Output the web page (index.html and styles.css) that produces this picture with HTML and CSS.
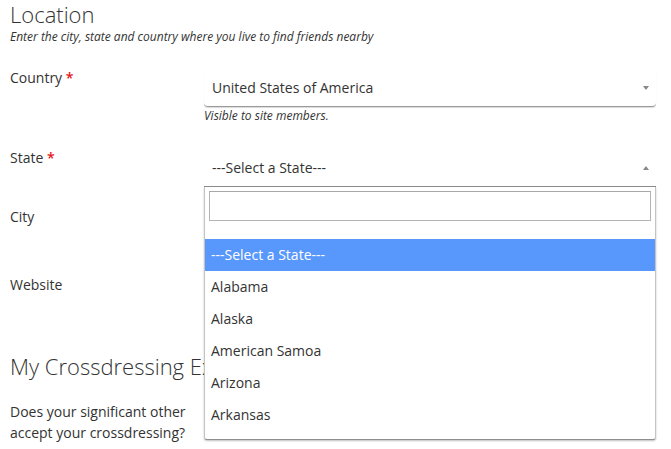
FILE: index.html
```html
<!DOCTYPE html>
<html>
<head>
<meta charset="utf-8">
<link rel="stylesheet" href="styles.css">
</head>
<body>
<div class="page">
  <h2 class="section-title">Location</h2>
  <p class="section-sub">Enter the city, state and country where you live to find friends nearby</p>

  <div class="row row-country">
    <label class="label">Country <span class="req">*</span></label>
    <div class="field">
      <div class="select">
        <span class="select-text">United States of America</span>
        <span class="arrow arrow-down"></span>
      </div>
      <div class="help">Visible to site members.</div>
    </div>
  </div>

  <div class="row row-state">
    <label class="label">State <span class="req">*</span></label>
    <div class="field field-open">
      <div class="select select-open">
        <span class="select-text">---Select a State---</span>
        <span class="arrow arrow-up"></span>
      </div>
      <div class="dropdown">
        <div class="dd-search"><input class="dd-input" type="text"></div>
        <ul class="dd-results">
          <li class="dd-option dd-active">---Select a State---</li>
          <li class="dd-option">Alabama</li>
          <li class="dd-option">Alaska</li>
          <li class="dd-option">American Samoa</li>
          <li class="dd-option">Arizona</li>
          <li class="dd-option">Arkansas</li>
        </ul>
      </div>
    </div>
  </div>

  <div class="row row-city">
    <label class="label">City</label>
    <div class="field"><div class="text-input"></div></div>
  </div>

  <div class="row row-website">
    <label class="label">Website</label>
    <div class="field"><div class="text-input"></div></div>
  </div>

  <h2 class="section-title section-title-2">My Crossdressing Experience</h2>

  <div class="row row-question">
    <label class="label label-wrap">Does your significant other accept your crossdressing?</label>
    <div class="field"></div>
  </div>
</div>
</body>
</html>
```

FILE: styles.css
```css
html, body {
  margin: 0;
  padding: 0;
  background: #fff;
}
body {
  font-family: "Open Sans", "Noto Sans", sans-serif;
  color: #333;
  font-size: 14px;
  overflow: hidden;
}
.page {
  padding: 0 10px;
  width: 646px;
}
.section-title {
  margin: 0;
  font-size: 22px;
  font-weight: 300;
  line-height: 29px;
  color: #333;
  white-space: nowrap;
}
.section-sub {
  margin: 0;
  font-size: 12px;
  font-style: italic;
  line-height: 16px;
  color: #333;
}
.row {
  display: grid;
  grid-template-columns: 194px 452px;
  align-items: start;
}
.row-country { margin-top: 24px; }
.row-state { margin-top: 25px; }
.row-city { margin-top: 21px; }
.row-website { margin-top: 30px; }
.section-title-2 { margin-top: 38px; }
.row-question { margin-top: 20px; }

.label {
  font-size: 14px;
  line-height: 17px;
  color: #333;
}
.label-wrap {
  line-height: 21px;
  padding-right: 10px;
}
.req {
  color: #e3161b;
  font-weight: 600;
}
.field {
  position: relative;
}
.select {
  height: 37px;
  border-bottom: 1px solid #9a9a9a;
  border-radius: 0 0 4px 4px;
  box-shadow: 0 1px 1px rgba(0,0,0,0.15);
  display: flex;
  align-items: center;
  justify-content: space-between;
  padding: 0 7px 0 8px;
  box-sizing: content-box;
}
.select-open {
  border-radius: 0;
  box-shadow: none;
  border-bottom-color: #8c8c8c;
}
.select-text {
  font-size: 14px;
  line-height: 34px;
  color: #333;
}
.arrow {
  width: 0;
  height: 0;
  border-left: 3.5px solid transparent;
  border-right: 3.5px solid transparent;
}
.arrow-down {
  border-top: 4px solid #888;
}
.arrow-up {
  border-bottom: 4px solid #888;
}
.help {
  margin-top: 1px;
  font-size: 12px;
  font-style: italic;
  line-height: 16px;
  color: #333;
}
.text-input {
  height: 37px;
  border-bottom: 1px solid #9a9a9a;
}
.dropdown {
  position: absolute;
  top: 100%;
  left: 0;
  width: 450px;
  background: #fff;
  border: 1px solid #c4c4c4;
  border-top: none;
  border-bottom: 1px solid #8e8e8e;
  border-radius: 0 0 3px 3px;
  box-shadow: 0 1px 2px rgba(0,0,0,0.25);
  z-index: 10;
  padding-bottom: 8px;
}
.dd-search {
  padding: 4px 4px 0 4px;
}
.dd-input {
  display: block;
  width: 100%;
  box-sizing: border-box;
  height: 30px;
  margin: 0;
  border: 1px solid #b4b4b4;
  border-top-color: #a8a8a8;
  outline: none;
  padding: 0 4px;
  font-family: inherit;
}
.dd-results {
  list-style: none;
  margin: 0;
  padding: 18px 0 0 0;
}
.dd-option {
  height: 32px;
  line-height: 32px;
  padding-left: 6px;
  font-size: 14px;
  color: #333;
}
.dd-active {
  background: #5897fb;
  color: #fff;
}
```
